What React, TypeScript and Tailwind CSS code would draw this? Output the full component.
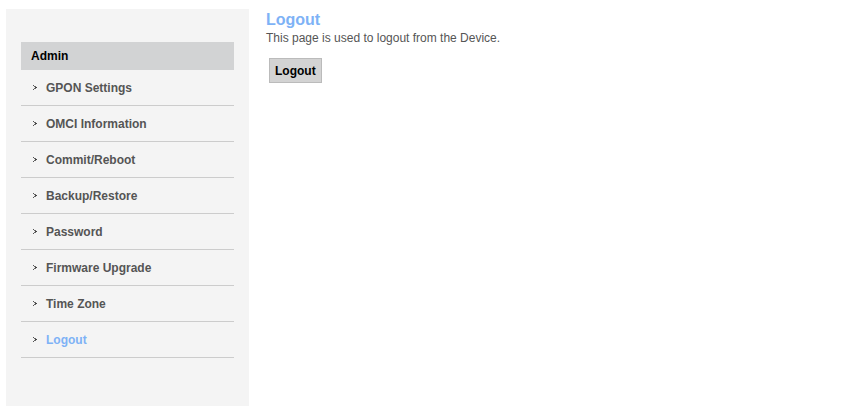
import React from "react";

const items = [
  "GPON Settings",
  "OMCI Information",
  "Commit/Reboot",
  "Backup/Restore",
  "Password",
  "Firmware Upgrade",
  "Time Zone",
  "Logout",
];

function Arrow() {
  return (
    <svg width="4" height="5" viewBox="0 0 4 5" className="shrink-0">
      <rect x="0" y="0" width="1" height="1" fill="#555" />
      <rect x="1" y="1" width="2" height="1" fill="#666" />
      <rect x="2" y="2" width="2" height="1" fill="#444" />
      <rect x="1" y="3" width="2" height="1" fill="#666" />
      <rect x="0" y="4" width="1" height="1" fill="#555" />
    </svg>
  );
}

export default function App() {
  return (
    <div
      className="flex w-[842px] h-[413px] bg-white"
      style={{ fontFamily: '"Liberation Sans", Arial, sans-serif' }}
    >
      <div className="ml-[6px] mt-[9px] w-[243px] h-[397px] bg-[#f4f4f4] pt-[33px] px-[15px] shrink-0">
        <div className="h-[28px] bg-[#d2d3d4] pl-[10px] flex items-center text-[12px] font-bold text-black">
          Admin
        </div>
        {items.map((it) => (
          <div
            key={it}
            className="h-[36px] border-b border-[#cccccc] flex items-center pl-[12px] gap-[9px]"
          >
            <Arrow />
            <span
              className={
                "text-[12px] font-bold " +
                (it === "Logout" ? "text-[#7eb2f6]" : "text-[#555555]")
              }
            >
              {it}
            </span>
          </div>
        ))}
      </div>
      <div className="ml-[17px] pt-[10px]">
        <div className="text-[16px] font-bold text-[#7eb2f6] leading-[20px]">
          Logout
        </div>
        <div className="text-[12px] text-[#555] leading-[16px]">
          This page is used to logout from the Device.
        </div>
        <button className="mt-[12px] ml-[3px] h-[25px] px-[5px] bg-[#d3d3d3] border border-[#bbbbbb] text-[12px] font-bold text-black">
          Logout
        </button>
      </div>
    </div>
  );
}
